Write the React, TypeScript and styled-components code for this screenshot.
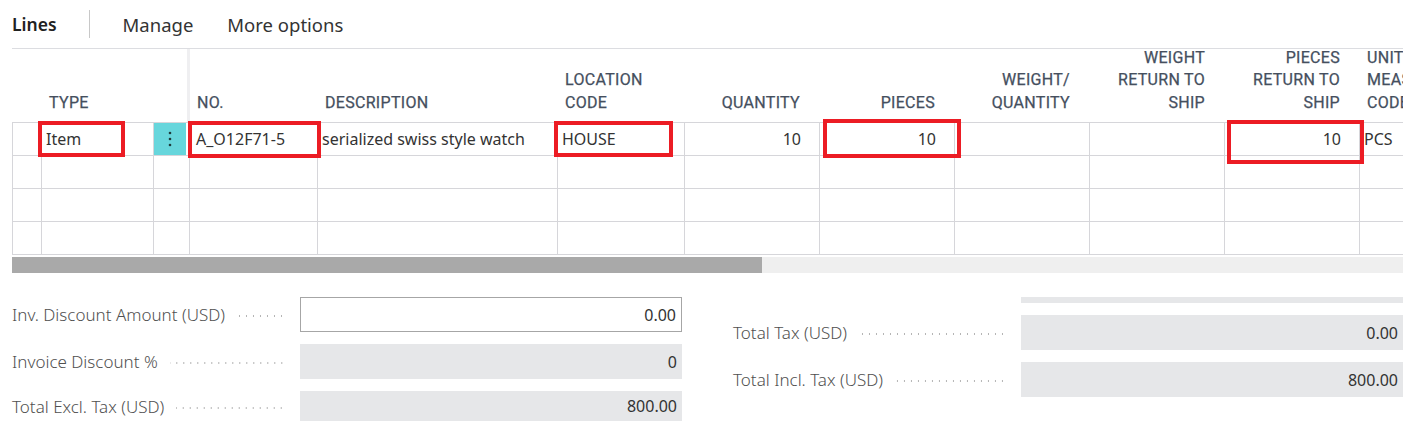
import styled, { createGlobalStyle } from 'styled-components';

const GlobalStyle = createGlobalStyle`
	* {
		box-sizing: border-box;
	}

	body {
		margin: 0;
		background: #ffffff;
		color: #212121;
		font-family: 'Noto Sans', 'Open Sans', sans-serif;
	}
`;

type Align = 'left' | 'right';

type Column = {
	key: string;
	title: string[];
	width: number;
	align: Align;
};

const columns: Column[] = [
	{ key: 'select', title: [], width: 30, align: 'left' },
	{ key: 'type', title: ['Type'], width: 112, align: 'left' },
	{ key: 'menu', title: [], width: 36, align: 'left' },
	{ key: 'no', title: ['No.'], width: 128, align: 'left' },
	{ key: 'description', title: ['Description'], width: 240, align: 'left' },
	{ key: 'location', title: ['Location', 'Code'], width: 127, align: 'left' },
	{ key: 'quantity', title: ['Quantity'], width: 135, align: 'right' },
	{ key: 'pieces', title: ['Pieces'], width: 135, align: 'right' },
	{ key: 'weightQty', title: ['Weight/', 'Quantity'], width: 135, align: 'right' },
	{ key: 'weightReturn', title: ['Weight', 'Return to', 'Ship'], width: 135, align: 'right' },
	{ key: 'piecesReturn', title: ['Pieces', 'Return to', 'Ship'], width: 135, align: 'right' },
	{ key: 'unit', title: ['Unit of', 'Measure', 'Code'], width: 135, align: 'left' },
];

const rows: Record<string, string>[] = [
	{
		type: 'Item',
		menu: 'active',
		no: 'A_O12F71-5',
		description: 'serialized swiss style watch',
		location: 'HOUSE',
		quantity: '10',
		pieces: '10',
		piecesReturn: '10',
		unit: 'PCS',
	},
	{},
	{},
	{},
];

// red annotation boxes drawn over the grid, relative to the grid's top-left
const marks = [
	{ left: 26, top: 72, width: 87, height: 36 },
	{ left: 176, top: 72, width: 133, height: 37 },
	{ left: 542, top: 72, width: 119, height: 36 },
	{ left: 811, top: 70, width: 138, height: 39 },
	{ left: 1215, top: 71, width: 137, height: 44 },
];

const template = columns.map((c) => `${c.width}px`).join(' ');

const App = () => {
	return (
		<>
			<GlobalStyle />
			<Page>
				<ActionBar>
					<Title>Lines</Title>
					<Divider />
					<Action>Manage</Action>
					<Action>More options</Action>
				</ActionBar>

				<GridWrap>
					<Grid $template={template}>
						{columns.map((c) => (
							<HeaderCell key={c.key} $align={c.align} $frozen={c.key === 'menu'}>
								{c.title.map((line) => (
									<span key={line}>{line}</span>
								))}
							</HeaderCell>
						))}
						{rows.map((row, i) =>
							columns.map((c, j) =>
								c.key === 'menu' ? (
									<MenuCell key={`${i}-${c.key}`} $active={row.menu === 'active'}>
										{row.menu === 'active' && (
											<svg width="4" height="16" viewBox="0 0 4 16">
												<circle cx="2" cy="2" r="1.3" fill="#1f3b3d" />
												<circle cx="2" cy="8" r="1.3" fill="#1f3b3d" />
												<circle cx="2" cy="14" r="1.3" fill="#1f3b3d" />
											</svg>
										)}
									</MenuCell>
								) : (
									<BodyCell
										key={`${i}-${c.key}`}
										$align={c.align}
										$first={j === 0}
										$shift={c.key === 'no' ? 2 : 0}
									>
										{row[c.key] ?? ''}
									</BodyCell>
								),
							),
						)}
					</Grid>
					{marks.map((m, i) => (
						<Mark
							key={i}
							style={{ left: m.left, top: m.top, width: m.width, height: m.height }}
						/>
					))}
				</GridWrap>

				<ScrollTrack>
					<ScrollThumb />
				</ScrollTrack>

				<Totals>
					<TotalsColumn>
						<Field>
							<FieldLabel>
								Inv. Discount Amount (USD)
								<Leader />
							</FieldLabel>
							<FieldValue $editable>0.00</FieldValue>
						</Field>
						<Field>
							<FieldLabel>
								Invoice Discount %
								<Leader />
							</FieldLabel>
							<FieldValue>0</FieldValue>
						</Field>
						<Field $height={30}>
							<FieldLabel>
								Total Excl. Tax (USD)
								<Leader />
							</FieldLabel>
							<FieldValue>800.00</FieldValue>
						</Field>
					</TotalsColumn>

					<TotalsColumn>
						<Field $height={6}>
							<FieldLabel />
							<FieldValue />
						</Field>
						<Field>
							<FieldLabel>
								Total Tax (USD)
								<Leader />
							</FieldLabel>
							<FieldValue>0.00</FieldValue>
						</Field>
						<Field>
							<FieldLabel>
								Total Incl. Tax (USD)
								<Leader />
							</FieldLabel>
							<FieldValue>800.00</FieldValue>
						</Field>
					</TotalsColumn>
				</Totals>
			</Page>
		</>
	);
};

export default App;

const Page = styled.div`
	padding: 0 9px 0 12px;
	width: 1412px;
`;

const ActionBar = styled.div`
	display: flex;
	align-items: center;
	height: 49px;
	border-bottom: 1px solid #dcdde1;
`;

const Title = styled.div`
	font-size: 17.5px;
	font-weight: 600;
	color: #212121;
	padding-right: 32px;
`;

const Divider = styled.div`
	width: 1px;
	height: 28px;
	background: #c8c8c8;
	margin-right: 33px;
`;

const Action = styled.div`
	font-size: 18.5px;
	color: #333333;
	margin-right: 34px;
`;

const GridWrap = styled.div`
	position: relative;
	width: 1391px;
	overflow: hidden;
`;

const Grid = styled.div<{ $template: string }>`
	display: grid;
	grid-template-columns: ${({ $template }) => $template};
	grid-template-rows: 74px repeat(4, 33px);
`;

const HeaderCell = styled.div<{ $align: Align; $frozen: boolean }>`
	display: flex;
	flex-direction: column;
	justify-content: flex-end;
	align-items: ${({ $align }) => ($align === 'right' ? 'flex-end' : 'flex-start')};
	padding: 0 20px 8px 7px;
	border-bottom: 1px solid #d6d6da;
	border-right: ${({ $frozen }) => ($frozen ? '3px solid #efeff1' : 'none')};
	font-family: Roboto, 'Noto Sans', sans-serif;
	font-size: 16px;
	font-weight: 400;
	line-height: 22.5px;
	letter-spacing: 0.3px;
	text-transform: uppercase;
	color: #454f5e;
	-webkit-text-stroke: 0.25px #454f5e;
	white-space: nowrap;

	span {
		display: block;
	}
`;

const BodyCell = styled.div<{ $align: Align; $first: boolean; $shift: number }>`
	display: flex;
	align-items: center;
	justify-content: ${({ $align }) => ($align === 'right' ? 'flex-end' : 'flex-start')};
	padding: 0 18px 0 ${({ $shift }) => 4 + $shift}px;
	border-right: 1px solid #d6d6da;
	border-bottom: 1px solid #d6d6da;
	border-left: ${({ $first }) => ($first ? '1px solid #d6d6da' : 'none')};
	font-size: 16px;
	color: #333333;
	white-space: nowrap;
	overflow: hidden;
`;

const MenuCell = styled.div<{ $active: boolean }>`
	display: flex;
	align-items: center;
	justify-content: center;
	padding-right: 3px;
	border-right: 1px solid #d6d6da;
	border-bottom: 1px solid #d6d6da;
	background: ${({ $active }) => ($active ? '#67d6dc' : 'transparent')};
	background-clip: content-box;
`;

const Mark = styled.div`
	position: absolute;
	border: 4px solid #ec1c24;
	pointer-events: none;
`;

const ScrollTrack = styled.div`
	width: 1391px;
	height: 16px;
	margin-top: 2px;
	background: #efefef;
`;

const ScrollThumb = styled.div`
	width: 750px;
	height: 100%;
	background: #a9a9a9;
`;

const Totals = styled.div`
	display: grid;
	grid-template-columns: 670px 670px;
	column-gap: 51px;
	padding-top: 24px;
`;

const TotalsColumn = styled.div`
	display: flex;
	flex-direction: column;
	gap: 12px;
`;

const Field = styled.div<{ $height?: number }>`
	display: flex;
	align-items: center;
	height: ${({ $height }) => $height ?? 35}px;
`;

const FieldLabel = styled.div`
	display: flex;
	align-items: center;
	gap: 12px;
	width: 288px;
	padding-right: 15px;
	font-size: 17px;
	font-weight: 300;
	color: #505050;
	white-space: nowrap;
`;

const Leader = styled.span`
	flex: 1;
	height: 2px;
	margin-top: 3px;
	background: radial-gradient(circle, #b4b4b4 0.8px, transparent 1.1px) right center / 7px 2px
		repeat-x;
`;

const FieldValue = styled.div<{ $editable?: boolean }>`
	display: flex;
	align-items: center;
	justify-content: flex-end;
	width: 382px;
	height: 100%;
	padding: 0 5px;
	background: ${({ $editable }) => ($editable ? '#ffffff' : '#e6e7e9')};
	border: ${({ $editable }) => ($editable ? '1px solid #a6a6a6' : 'none')};
	font-size: 16px;
	color: #333333;
`;
